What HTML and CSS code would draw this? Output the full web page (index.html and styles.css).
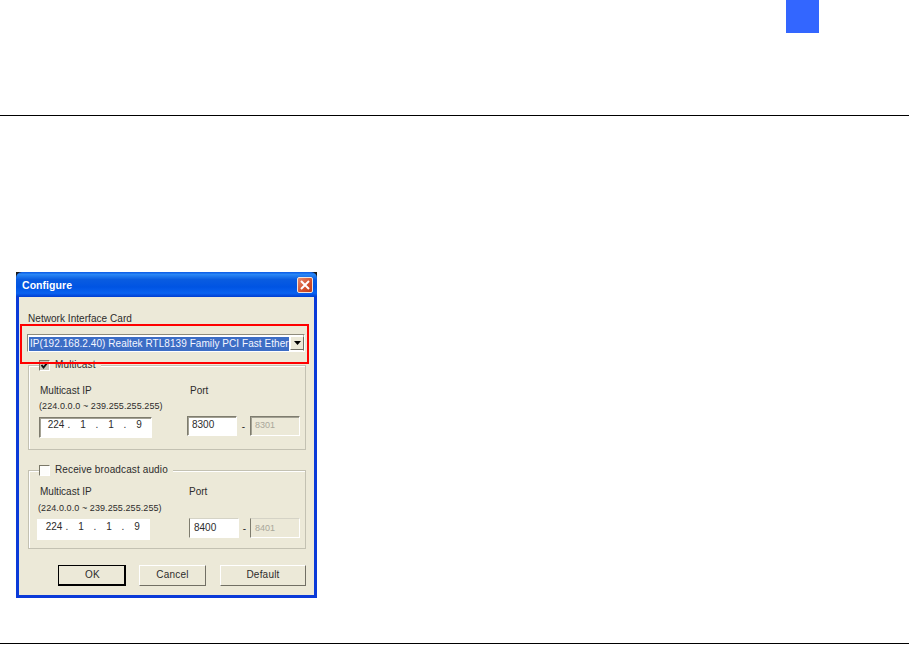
FILE: index.html
```html
<!DOCTYPE html>
<html lang="en">
<head>
<meta charset="utf-8">
<title>Configure</title>
<link rel="stylesheet" href="styles.css">
</head>
<body>
<div class="tab"></div>
<hr class="rule rule-top">
<section class="dialog">
  <header class="titlebar">
    <span class="title">Configure</span>
    <span class="close"><svg width="10" height="10" viewBox="0 0 10 10"><path d="M1 1L9 9M9 1L1 9" stroke="#fff" stroke-width="2" fill="none"/></svg></span>
  </header>
  <div class="client">
    <div class="nic-label">Network Interface Card</div>
    <div class="combo">
      <div class="combo-text">IP(192.168.2.40) Realtek RTL8139 Family PCI Fast Ether</div>
      <div class="combo-btn"><svg width="7" height="4" viewBox="0 0 7 4"><path d="M0 0H7L3.5 4Z" fill="#000"/></svg></div>
    </div>

    <div class="group group-a">
      <div class="legend">
        <span class="check check-on"><svg width="9" height="9" viewBox="0 0 9 9"><path d="M1.5 4L3.5 6.5L7.5 1.5" stroke="#111" stroke-width="2" fill="none"/></svg></span>
        <span>Multicast</span>
      </div>
      <div class="fields">
        <div class="col-ip">
          <div class="lbl">Multicast IP</div>
          <div class="hint">(224.0.0.0 ~ 239.255.255.255)</div>
          <div class="input ip"><span>224</span><i>.</i><span>1</span><i>.</i><span>1</span><i>.</i><span>9</span></div>
        </div>
        <div class="col-port">
          <div class="lbl">Port</div>
          <div class="port-row">
            <div class="input port">8300</div>
            <span class="dash">-</span>
            <div class="input port off">8301</div>
          </div>
        </div>
      </div>
    </div>

    <div class="group group-b">
      <div class="legend">
        <span class="check"></span>
        <span>Receive broadcast audio</span>
      </div>
      <div class="fields">
        <div class="col-ip">
          <div class="lbl">Multicast IP</div>
          <div class="hint">(224.0.0.0 ~ 239.255.255.255)</div>
          <div class="input ip"><span>224</span><i>.</i><span>1</span><i>.</i><span>1</span><i>.</i><span>9</span></div>
        </div>
        <div class="col-port">
          <div class="lbl">Port</div>
          <div class="port-row">
            <div class="input port">8400</div>
            <span class="dash">-</span>
            <div class="input port off">8401</div>
          </div>
        </div>
      </div>
    </div>

    <div class="actions">
      <div class="btn btn-ok">OK</div>
      <div class="btn btn-cancel">Cancel</div>
      <div class="btn btn-default">Default</div>
    </div>
    <div class="highlight"></div>
  </div>
</section>
<hr class="rule rule-bottom">
</body>
</html>
```
FILE: styles.css
```css
html, body { margin: 0; padding: 0; background: #fff; }
body { width: 909px; height: 645px; overflow: hidden; font-family: "Liberation Sans", Arial, sans-serif; font-size: 10px; color: #2c2c2c; }

.tab { width: 33px; height: 33px; margin-left: 786px; background: #3366ff; }
.rule { border: 0; height: 1px; background: #000; margin: 0; }
.rule-top { margin-top: 82px; }
.rule-bottom { margin-top: 45px; }

.dialog { box-sizing: border-box; width: 301px; height: 326px; margin: 156px 0 0 16px; background: #1a1a1a; display: flex; flex-direction: column; }
.titlebar { height: 25px; flex: none; display: flex; align-items: center; justify-content: space-between; box-sizing: border-box; padding: 0 4px 0 6px; border-radius: 6px 6px 0 0; background: linear-gradient(#0a5ae6 0, #2a86f5 10%, #0a5ce0 30%, #0054e3 60%, #0a62f0 85%, #003dd0 100%); }
.title { color: #fff; font-weight: bold; font-size: 10.5px; letter-spacing: .05px; }
.close { width: 16px; height: 16px; box-sizing: border-box; border: 1px solid #f2e4dc; border-radius: 2px; background: linear-gradient(135deg, #e88a6e, #d2502c 60%, #bf3d1d); display: flex; align-items: center; justify-content: center; }

.client { position: relative; flex: 1; box-sizing: border-box; background: #ece9d8; margin: 0; border: solid #0a3ad8; border-width: 0 3px 3px 3px; padding: 0 0 0 9px; }

.nic-label { margin-top: 15px; line-height: 14px; letter-spacing: .05px; }
.combo { box-sizing: border-box; width: 278px; height: 18px; margin-top: 8px; margin-left: -1px; display: flex; padding: 1px; align-items: stretch; background: #fff; border: 1px solid; border-color: #8e8b7c #fff #fff #8e8b7c; box-shadow: inset -1px 0 0 #b8b6a8; }
.combo-text { width: 260px; height: 14px; margin-top: 1px; flex: none; overflow: hidden; white-space: nowrap; background: #3c6dc5; color: #f4f6ff; line-height: 14px; font-size: 10px; letter-spacing: .06px; padding-left: 1px; box-sizing: border-box; }
.combo-btn { flex: none; width: 14px; margin-left: 1px; box-sizing: border-box; display: flex; align-items: center; justify-content: center; background: #ece9d8; border: 1px solid; border-color: #fff #716f64 #716f64 #fff; }
.highlight { position: absolute; left: 1px; top: 27px; width: 289px; height: 40px; box-sizing: border-box; border: 2px solid #f00; pointer-events: none; }

.group { position: relative; box-sizing: border-box; width: 278px; border: 1px solid #c3c1b2; box-shadow: inset 1px 1px 0 #fff; }
.group-a { height: 85px; margin-top: 13px; }
.group-b { height: 79px; margin-top: 20px; }
.legend { position: absolute; left: 10px; top: -7px; display: flex; align-items: center; gap: 5px; background: #ece9d8; padding-right: 5px; line-height: 12px; letter-spacing: .12px; }
.check { width: 11px; height: 11px; box-sizing: border-box; flex: none; display: flex; align-items: center; justify-content: center; background: #fdfdfb; border: 1px solid; border-color: #7a7868 #fff #fff #7a7868; }
.check-on { background: #c9c7ba; }

.fields { display: flex; }
.group-a .fields { padding: 18px 0 0 10px; gap: 35px; }
.group-b .fields { padding: 14px 0 0 8px; gap: 39px; }
.col-ip { width: 113px; flex: none; }
.lbl { line-height: 14px; }
.col-ip .lbl { margin-left: 1px; }
.group-b .col-ip .lbl { margin-left: 3px; }
.hint { font-size: 9px; line-height: 11px; margin-top: 4px; white-space: nowrap; letter-spacing: .08px; }
.group-a .hint { margin-top: 3px; }
.group-b .hint { margin-left: 1px; }
.group-a .col-port .lbl { margin-left: 3px; }
.group-b .col-port .lbl { margin-left: 0; }

.input { box-sizing: border-box; border: 1px solid; border-color: #7e7c6e #fff #fff #7e7c6e; background: #fff; font-size: 10px; line-height: 16px; }
.group-a .input { box-shadow: inset 1px 1px 0 #a3a193; }
.group-b .port { line-height: 18px; }
.group-b .ip { border-color: #fff; }
.group-b .port { border-top-color: #d5d3c6; }
.ip { width: 113px; height: 21px; margin-top: 5px; display: flex; padding-left: 7px; line-height: 14px; }
.ip span { width: 20px; text-align: center; flex: none; }
.ip i { width: 8px; font-style: normal; text-align: center; flex: none; }
.ip span:first-child { width: 18px; }
.port-row { display: flex; align-items: center; margin-top: 19px; }
.group-a .port-row { margin-top: 18px; }
.port { width: 50px; height: 20px; padding-left: 4px; }
.dash { width: 13px; text-align: center; }
.off { background: #ece9d8; color: #a9a79a; font-size: 9px; }
.group-b .dash { width: 11px; }

.actions { display: flex; margin: 16px 0 0 30px; }
.btn { box-sizing: border-box; height: 21px; display: flex; align-items: center; justify-content: center; background: #ece9d8; border: 1px solid; border-color: #fff #716f64 #716f64 #fff; letter-spacing: .2px; font-size: 10px; padding-bottom: 2px; }
.btn-ok { width: 68px; border: 1px solid #000; border-width: 1px 2px 2px 1px; margin-right: 13px; padding-left: 2px; }
.btn-cancel { width: 67px; margin-right: 14px; }
.btn-default { width: 86px; }
```
